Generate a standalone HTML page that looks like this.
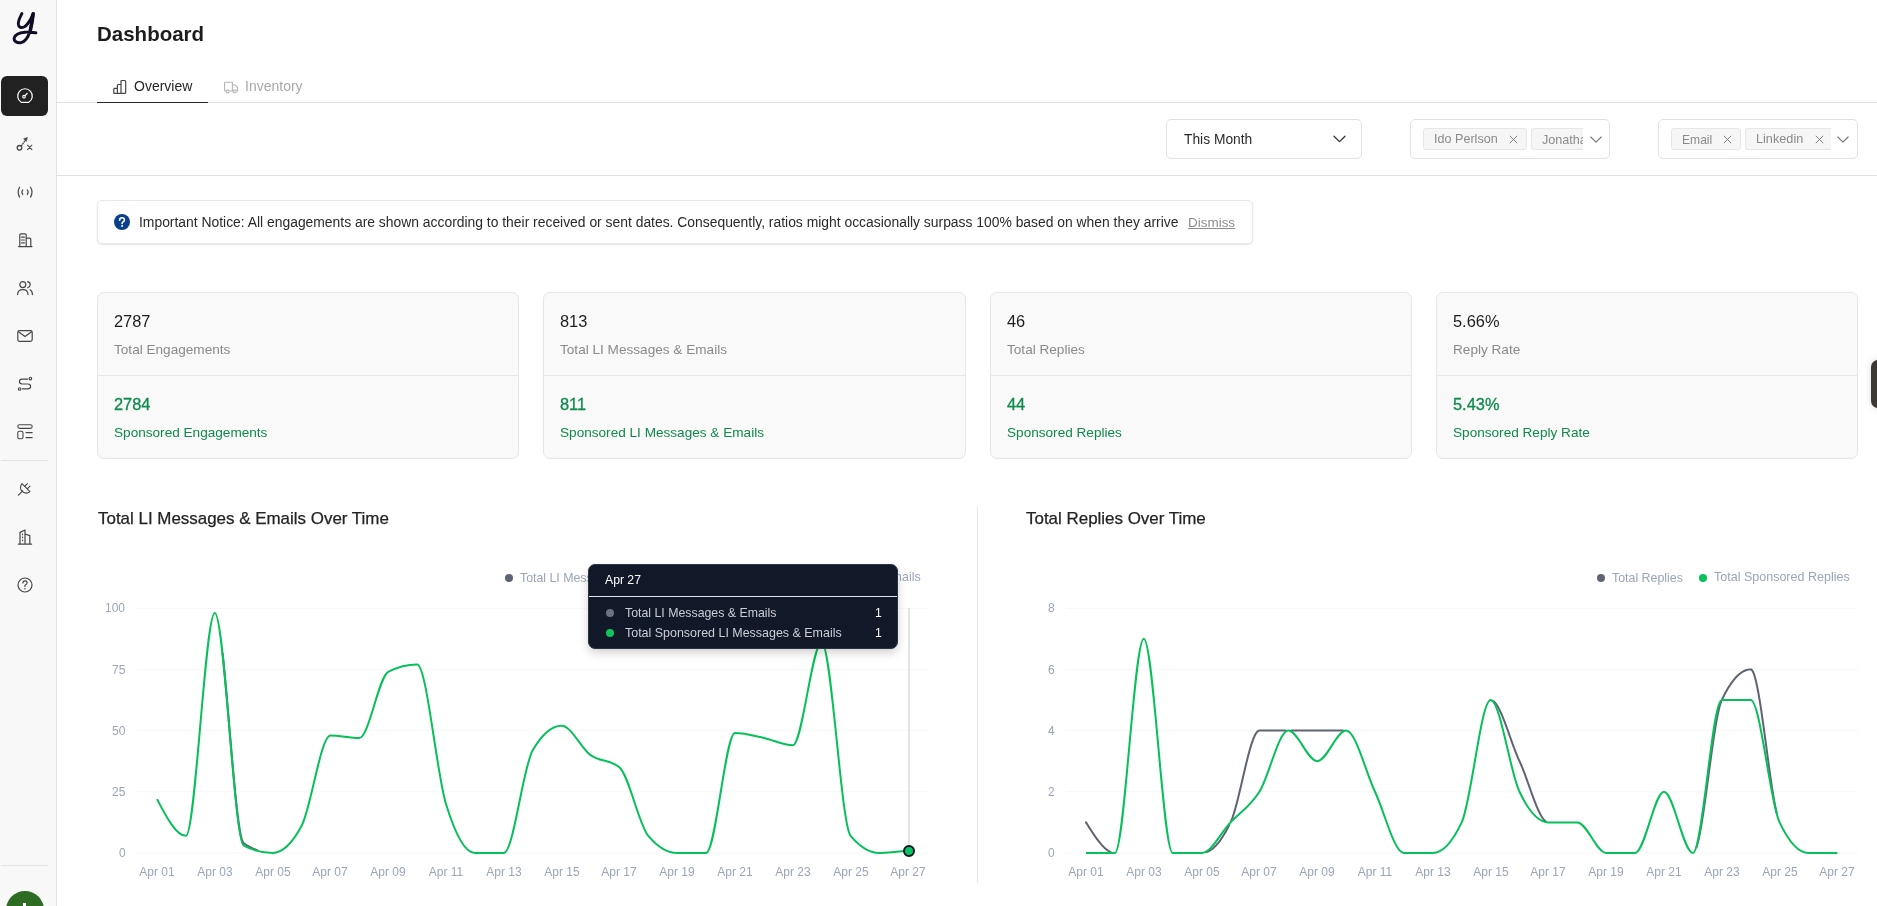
<!DOCTYPE html>
<html><head><meta charset="utf-8"><title>Dashboard</title>
<style>
html,body{margin:0;padding:0;background:#fff;}
body{width:1877px;height:906px;overflow:hidden;position:relative;font-family:"Liberation Sans", sans-serif;}
.t{position:absolute;white-space:nowrap;will-change:transform;}
.b{position:absolute;box-sizing:border-box;}
svg{position:absolute;overflow:visible;}
</style></head><body>
<div class="b" style="left:0px;top:0px;width:57px;height:906px;background:#f8f8f8;border-right:1px solid #e6e2e2;"></div><svg style="left:0;top:0" width="57" height="60" viewBox="0 0 57 60"><path d="M21.9,13.6 C20.2,17 18.2,20.5 18.3,24 C18.4,27 21,28.4 24,27 C27.5,25.2 31,19 33.2,13.6 C32.5,19 31.6,25 30,31.2 C28.2,37 25.5,41.5 21,42.6 C17,43.5 13.6,41 14.2,38 C15,34.6 20,32.6 25,32.2 C29,31.9 33,32.6 35.9,32.8" fill="none" stroke="#120d26" stroke-width="2.9" stroke-linecap="round" stroke-linejoin="round"/><path d="M33.2,13.8 C32.6,19 31.8,24.5 30.4,30" fill="none" stroke="#120d26" stroke-width="3.5" stroke-linecap="round"/></svg><div class="b" style="left:1px;top:76px;width:47px;height:40px;background:#212121;border-radius:6px;"></div><svg style="left:16px;top:88px" width="18" height="16" viewBox="0 0 18 16"><path d="M5.2,14.3 A7.3,7.3 0 1 1 12.8,14.3 Z" fill="none" stroke-linecap="round" stroke-linejoin="round" stroke="#fff" stroke-width="1.2"/><circle cx="8" cy="8.7" r="1.3" fill="none" stroke-linecap="round" stroke-linejoin="round" stroke="#fff" stroke-width="1.1"/><path d="M9,7.7 L11.2,5.5" fill="none" stroke-linecap="round" stroke-linejoin="round" stroke="#fff" stroke-width="1.2"/></svg><svg style="left:15px;top:135px" width="20" height="18" viewBox="0 0 20 18"><circle cx="4.5" cy="12.8" r="2.3" fill="none" stroke-linecap="round" stroke-linejoin="round" stroke="#474747" stroke-width="1.3"/><path d="M6.3,10.8 L10.6,5" fill="none" stroke-linecap="round" stroke-linejoin="round" stroke="#474747" stroke-width="1.3" stroke-dasharray="0.9 1.5"/><path d="M12.4,2.6 L8.6,3.7 L11.3,6.4 Z" fill="#474747" stroke="#474747" stroke-width="0.6" stroke-linejoin="round"/><path d="M12.5,10.2 L16.9,14.6 M16.9,10.2 L12.5,14.6" fill="none" stroke-linecap="round" stroke-linejoin="round" stroke="#474747" stroke-width="1.05"/></svg><svg style="left:16px;top:184px" width="18" height="16" viewBox="0 0 18 16"><path d="M3.6,3.2 Q0.8,8.2 3.6,13.1 M14.6,3.2 Q17.4,8.2 14.6,13.1" fill="none" stroke-linecap="round" stroke-linejoin="round" stroke="#474747" stroke-width="1.2"/><path d="M6.8,5.9 Q4.8,8.3 6.8,10.7 M11.2,5.9 Q13.2,8.3 11.2,10.7" fill="none" stroke-linecap="round" stroke-linejoin="round" stroke="#474747" stroke-width="1.05"/></svg><svg style="left:16px;top:232px" width="18" height="16" viewBox="0 0 18 16"><path d="M2.6,14.6 H16 M3.8,14.6 V3 Q3.8,1.8 5,1.8 H9 Q10.2,1.8 10.2,3 V14.6 M10.2,6.2 H13.6 Q14.8,6.2 14.8,7.4 V14.6 M5.6,5.2 H8.4 M5.6,8 H8.4 M5.6,10.8 H8.4" fill="none" stroke-linecap="round" stroke-linejoin="round" stroke="#474747" stroke-width="1.2"/></svg><svg style="left:16px;top:279px" width="18" height="18" viewBox="0 0 18 18"><circle cx="6.8" cy="5.6" r="3" fill="none" stroke-linecap="round" stroke-linejoin="round" stroke="#474747" stroke-width="1.2"/><path d="M1.6,15.6 Q1.6,10.6 6.8,10.6 Q12,10.6 12,15.6" fill="none" stroke-linecap="round" stroke-linejoin="round" stroke="#474747" stroke-width="1.2"/><path d="M11.6,2.6 Q14.4,3.2 14.2,6 Q14,8 11.8,8.6 M14,10.8 Q16.4,12 16.4,15.6" fill="none" stroke-linecap="round" stroke-linejoin="round" stroke="#474747" stroke-width="1.2"/></svg><svg style="left:16px;top:328px" width="18" height="16" viewBox="0 0 18 16"><rect x="1.8" y="2.6" width="14.4" height="10.8" rx="1.8" fill="none" stroke-linecap="round" stroke-linejoin="round" stroke="#474747" stroke-width="1.2"/><path d="M2.4,3.8 L9,8.6 L15.6,3.8" fill="none" stroke-linecap="round" stroke-linejoin="round" stroke="#474747" stroke-width="1.2"/></svg><svg style="left:16px;top:376px" width="18" height="16" viewBox="0 0 18 16"><circle cx="3.6" cy="13" r="1.3" fill="none" stroke-linecap="round" stroke-linejoin="round" stroke="#474747" stroke-width="1.1"/><circle cx="14.4" cy="2.6" r="1.3" fill="none" stroke-linecap="round" stroke-linejoin="round" stroke="#474747" stroke-width="1.1"/><path d="M11.6,3.2 H6.2 Q3.4,3.2 3.4,5.6 Q3.4,8 6.2,8 H11.8 Q14.6,8 14.6,10.4 Q14.6,12.8 11.8,12.8 H6.4" fill="none" stroke-linecap="round" stroke-linejoin="round" stroke="#474747" stroke-width="1.2"/></svg><svg style="left:16px;top:424px" width="18" height="16" viewBox="0 0 18 16"><rect x="1.8" y="0.8" width="14.4" height="3.6" rx="1.8" fill="none" stroke-linecap="round" stroke-linejoin="round" stroke="#474747" stroke-width="1.1"/><rect x="1.8" y="7.2" width="5.2" height="7.6" rx="1.6" fill="none" stroke-linecap="round" stroke-linejoin="round" stroke="#474747" stroke-width="1.1"/><path d="M10,8.6 H16.2 M10,13.6 H16.2" fill="none" stroke-linecap="round" stroke-linejoin="round" stroke="#474747" stroke-width="1.1"/></svg><div class="b" style="left:1px;top:460px;width:47px;height:1px;background:#e6e2e2;"></div><svg style="left:17px;top:479px" width="18" height="18" viewBox="0 0 18 18"><path d="M5,4.6 L13,12.6 A5.66,5.66 0 0 1 5,4.6 Z" fill="none" stroke-linecap="round" stroke-linejoin="round" stroke="#474747" stroke-width="1.1"/><path d="M7.7,7.3 L10.4,4.6 M10.3,9.9 L13,7.2 M5.8,11.8 L1.4,16.2" fill="none" stroke-linecap="round" stroke-linejoin="round" stroke="#474747" stroke-width="1.1"/></svg><svg style="left:16px;top:528px" width="18" height="18" viewBox="0 0 18 18"><path d="M2.4,16.2 H15.6 M4,16.2 V4.4 L9,2 V16.2 M9,6 L13.8,7.6 V16.2" fill="none" stroke-linecap="round" stroke-linejoin="round" stroke="#474747" stroke-width="1.2"/><path d="M6.6,6 V6.8 M6.6,9 V9.8 M6.6,12 V12.8" fill="none" stroke-linecap="round" stroke-linejoin="round" stroke="#474747" stroke-width="1"/></svg><svg style="left:16px;top:576px" width="18" height="18" viewBox="0 0 18 18"><circle cx="9" cy="9" r="7" fill="none" stroke-linecap="round" stroke-linejoin="round" stroke="#474747" stroke-width="1.2"/><path d="M6.9,7 Q7,4.9 9,4.9 Q11.1,4.9 11.1,6.8 Q11.1,8.2 9.3,9 Q8.9,9.3 8.9,10.4" fill="none" stroke-linecap="round" stroke-linejoin="round" stroke="#474747" stroke-width="1.2"/><circle cx="8.9" cy="12.8" r="0.7" fill="#474747"/></svg><div class="b" style="left:1px;top:865px;width:47px;height:1px;background:#e6e2e2;"></div><div class="b" style="left:6px;top:891px;width:38px;height:38px;background:#2e6b23;border-radius:50%;"></div><div class="b" style="left:23px;top:903px;width:3px;height:10px;background:#fff;"></div><div class="t" style="left:97px;top:23.65px;font-size:20.5px;line-height:20.5px;color:#1c1c1c;font-weight:700;">Dashboard</div><div class="b" style="left:57px;top:102px;width:1820px;height:1px;background:#dfe2e7;"></div><div class="b" style="left:97px;top:101.6px;width:111px;height:1.4px;background:#262626;"></div><svg style="left:112px;top:79px" width="16" height="16" viewBox="0 0 16 16"><path d="M1.8,14.4 V10.2 Q1.8,9.3 2.7,9.3 H5.4 V14.4 Z M5.4,14.4 V6.4 Q5.4,5.5 6.3,5.5 H9 V14.4 M9,14.4 V2.4 Q9,1.5 9.9,1.5 H12.8 Q13.7,1.5 13.7,2.4 V13.5 Q13.7,14.4 12.8,14.4 H2.7" fill="none" stroke="#444" stroke-width="1.2" stroke-linejoin="round"/></svg><div class="t" style="left:133.5px;top:79.25px;font-size:14px;line-height:14px;color:#262626;font-weight:400;">Overview</div><svg style="left:223px;top:79px" width="16" height="16" viewBox="0 0 16 16"><path d="M1.6,12 V4 Q1.6,3.2 2.4,3.2 H9.4 V12 M9.4,6 H12.4 L14.6,8.6 V12 H13.2 M1.6,12 H3 M6.2,12 H10.4" fill="none" stroke="#b5b5b5" stroke-width="1.1" stroke-linejoin="round"/><circle cx="4.6" cy="12.4" r="1.5" fill="none" stroke="#b5b5b5" stroke-width="1.1"/><circle cx="11.8" cy="12.4" r="1.5" fill="none" stroke="#b5b5b5" stroke-width="1.1"/></svg><div class="t" style="left:244.5px;top:79.25px;font-size:14px;line-height:14px;color:#a8a8a8;font-weight:400;">Inventory</div><div class="b" style="left:57px;top:175px;width:1820px;height:1px;background:#e6e2e2;"></div><div class="b" style="left:1166px;top:119px;width:196px;height:40px;border:1px solid #e6e1e1;border-radius:5px;background:#fff;"></div><div class="t" style="left:1183.5px;top:132.92px;font-size:13.8px;line-height:13.8px;color:#2a2a2a;font-weight:400;">This Month</div><svg style="left:1332.5px;top:135px" width="13" height="8" viewBox="0 0 13 8"><path d="M1,1.2 L6.5,6.6 L12,1.2" fill="none" stroke="#333" stroke-width="1.3" stroke-linecap="round" stroke-linejoin="round"/></svg><div class="b" style="left:1410px;top:119px;width:200px;height:40px;border:1px solid #e6e1e1;border-radius:5px;background:#fff;"></div><div class="b" style="left:1423px;top:128px;width:104px;height:22px;border:1px solid #ebe6e6;border-radius:3px;background:#f6f6f6;"></div><div class="t" style="left:1433.6px;top:133.43px;font-size:12.6px;line-height:12.6px;color:#8a8a8a;font-weight:400;">Ido Perlson</div><svg style="left:1508.5px;top:134.5px" width="9" height="9" viewBox="0 0 9 9"><path d="M0.8,0.8 L8.2,8.2 M8.2,0.8 L0.8,8.2" fill="none" stroke="#7a7a7a" stroke-width="0.95"/></svg><div class="b" style="left:1531px;top:128px;width:52px;height:22px;overflow:hidden;border:1px solid #ebe6e6;border-right:none;border-radius:3px 0 0 3px;background:#f6f6f6;"><div class="t" style="left:10px;top:5.43px;font-size:12.6px;line-height:12.6px;color:#8a8a8a;">Jonathan</div></div><svg style="left:1589.5px;top:135.5px" width="12" height="8" viewBox="0 0 12 8"><path d="M0.8,1 L6,6.2 L11.2,1" fill="none" stroke="#777" stroke-width="1.1" stroke-linecap="round" stroke-linejoin="round"/></svg><div class="b" style="left:1658px;top:119px;width:200px;height:40px;border:1px solid #e6e1e1;border-radius:5px;background:#fff;"></div><div class="b" style="left:1671px;top:128px;width:70px;height:22px;border:1px solid #ebe6e6;border-radius:3px;background:#f6f6f6;"></div><div class="t" style="left:1681.7px;top:133.86px;font-size:12.1px;line-height:12.1px;color:#8a8a8a;font-weight:400;">Email</div><svg style="left:1722.5px;top:134.5px" width="9" height="9" viewBox="0 0 9 9"><path d="M0.8,0.8 L8.2,8.2 M8.2,0.8 L0.8,8.2" fill="none" stroke="#7a7a7a" stroke-width="0.95"/></svg><div class="b" style="left:1745px;top:128px;width:86px;height:22px;border:1px solid #ebe6e6;border-right:none;border-radius:3px 0 0 3px;background:#f6f6f6;"></div><div class="t" style="left:1756.4px;top:133.35px;font-size:12.7px;line-height:12.7px;color:#8a8a8a;font-weight:400;">Linkedin</div><svg style="left:1814.5px;top:134.5px" width="9" height="9" viewBox="0 0 9 9"><path d="M0.8,0.8 L8.2,8.2 M8.2,0.8 L0.8,8.2" fill="none" stroke="#7a7a7a" stroke-width="0.95"/></svg><svg style="left:1837px;top:135.5px" width="12" height="8" viewBox="0 0 12 8"><path d="M0.8,1 L6,6.2 L11.2,1" fill="none" stroke="#777" stroke-width="1.1" stroke-linecap="round" stroke-linejoin="round"/></svg><div class="b" style="left:97px;top:200px;width:1156px;height:44px;border:1px solid #ebe7e7;border-radius:5px;background:#fff;box-shadow:0 1px 2px rgba(0,0,0,0.10);"></div><svg style="left:114px;top:214px" width="16" height="16" viewBox="0 0 16 16"><circle cx="8" cy="8" r="8" fill="#0a3f8c"/><path d="M5.6,6.2 Q5.7,3.7 8,3.7 Q10.4,3.7 10.4,5.9 Q10.4,7.3 8.9,8 Q8.1,8.4 8.1,9.6" fill="none" stroke="#fff" stroke-width="1.6" stroke-linecap="round"/><circle cx="8.1" cy="12" r="1" fill="#fff"/></svg><div class="t" style="left:138.6px;top:216.04px;font-size:13.89px;line-height:13.89px;color:#2a2a2a;font-weight:400;">Important Notice: All engagements are shown according to their received or sent dates. Consequently, ratios might occasionally surpass 100% based on when they arrive</div><div class="t" style="left:1188.3px;top:216.41px;font-size:13.46px;line-height:13.46px;color:#8c8c8c;font-weight:400;text-decoration:underline;text-underline-offset:1px;">Dismiss</div><div class="b" style="left:97px;top:292px;width:422px;height:167px;border:1px solid #e9e5e5;border-radius:7px;background:#f9f9f9;"></div><div class="b" style="left:98px;top:375px;width:420px;height:1px;background:#e9e5e5;"></div><div class="t" style="left:114.2px;top:313.22px;font-size:16.4px;line-height:16.4px;color:#1e1e1e;font-weight:400;">2787</div><div class="t" style="left:114.2px;top:343.29px;font-size:13.6px;line-height:13.6px;color:#8a8a8a;font-weight:400;">Total Engagements</div><div class="t" style="left:114.2px;top:396.42px;font-size:16.4px;line-height:16.4px;color:#0f8a4c;font-weight:400;-webkit-text-stroke:0.3px #0f8a4c;">2784</div><div class="t" style="left:114.2px;top:426.39px;font-size:13.6px;line-height:13.6px;color:#0f8a4c;font-weight:400;">Sponsored Engagements</div><div class="b" style="left:543px;top:292px;width:423px;height:167px;border:1px solid #e9e5e5;border-radius:7px;background:#f9f9f9;"></div><div class="b" style="left:544px;top:375px;width:421px;height:1px;background:#e9e5e5;"></div><div class="t" style="left:560.2px;top:313.22px;font-size:16.4px;line-height:16.4px;color:#1e1e1e;font-weight:400;">813</div><div class="t" style="left:560.2px;top:343.29px;font-size:13.6px;line-height:13.6px;color:#8a8a8a;font-weight:400;">Total LI Messages &amp; Emails</div><div class="t" style="left:560.2px;top:396.42px;font-size:16.4px;line-height:16.4px;color:#0f8a4c;font-weight:400;-webkit-text-stroke:0.3px #0f8a4c;">811</div><div class="t" style="left:560.2px;top:426.39px;font-size:13.6px;line-height:13.6px;color:#0f8a4c;font-weight:400;">Sponsored LI Messages &amp; Emails</div><div class="b" style="left:990px;top:292px;width:422px;height:167px;border:1px solid #e9e5e5;border-radius:7px;background:#f9f9f9;"></div><div class="b" style="left:991px;top:375px;width:420px;height:1px;background:#e9e5e5;"></div><div class="t" style="left:1007.2px;top:313.22px;font-size:16.4px;line-height:16.4px;color:#1e1e1e;font-weight:400;">46</div><div class="t" style="left:1007.2px;top:343.29px;font-size:13.6px;line-height:13.6px;color:#8a8a8a;font-weight:400;">Total Replies</div><div class="t" style="left:1007.2px;top:396.42px;font-size:16.4px;line-height:16.4px;color:#0f8a4c;font-weight:400;-webkit-text-stroke:0.3px #0f8a4c;">44</div><div class="t" style="left:1007.2px;top:426.39px;font-size:13.6px;line-height:13.6px;color:#0f8a4c;font-weight:400;">Sponsored Replies</div><div class="b" style="left:1436px;top:292px;width:422px;height:167px;border:1px solid #e9e5e5;border-radius:7px;background:#f9f9f9;"></div><div class="b" style="left:1437px;top:375px;width:420px;height:1px;background:#e9e5e5;"></div><div class="t" style="left:1453.2px;top:313.22px;font-size:16.4px;line-height:16.4px;color:#1e1e1e;font-weight:400;">5.66%</div><div class="t" style="left:1453.2px;top:343.29px;font-size:13.6px;line-height:13.6px;color:#8a8a8a;font-weight:400;">Reply Rate</div><div class="t" style="left:1453.2px;top:396.42px;font-size:16.4px;line-height:16.4px;color:#0f8a4c;font-weight:400;-webkit-text-stroke:0.3px #0f8a4c;">5.43%</div><div class="t" style="left:1453.2px;top:426.39px;font-size:13.6px;line-height:13.6px;color:#0f8a4c;font-weight:400;">Sponsored Reply Rate</div><div class="b" style="left:1871px;top:360px;width:12px;height:48px;background:#3d3935;border-radius:7px 0 0 7px;box-shadow:0 0 6px rgba(0,0,0,0.15);"></div><div class="t" style="left:97.9px;top:510.75px;font-size:16.95px;line-height:16.95px;color:#232323;font-weight:400;-webkit-text-stroke:0.25px #232323;">Total LI Messages &amp; Emails Over Time</div><svg style="left:0;top:0" width="1877" height="906" viewBox="0 0 1877 906"><line x1="137" y1="853.00" x2="929" y2="853.00" stroke="#f7f7f7" stroke-width="1"/><line x1="137" y1="791.80" x2="929" y2="791.80" stroke="#f7f7f7" stroke-width="1"/><line x1="137" y1="730.60" x2="929" y2="730.60" stroke="#f7f7f7" stroke-width="1"/><line x1="137" y1="669.40" x2="929" y2="669.40" stroke="#f7f7f7" stroke-width="1"/><line x1="137" y1="608.20" x2="929" y2="608.20" stroke="#f7f7f7" stroke-width="1"/></svg><div class="t" style="right:1751.5px;top:847.24px;font-size:12px;line-height:12px;color:#9aa5b8;font-weight:400;text-align:right;">0</div><div class="t" style="right:1751.5px;top:786.04px;font-size:12px;line-height:12px;color:#9aa5b8;font-weight:400;text-align:right;">25</div><div class="t" style="right:1751.5px;top:724.84px;font-size:12px;line-height:12px;color:#9aa5b8;font-weight:400;text-align:right;">50</div><div class="t" style="right:1751.5px;top:663.64px;font-size:12px;line-height:12px;color:#9aa5b8;font-weight:400;text-align:right;">75</div><div class="t" style="right:1751.5px;top:602.44px;font-size:12px;line-height:12px;color:#9aa5b8;font-weight:400;text-align:right;">100</div><div class="t" style="left:97.0px;width:120px;text-align:center;top:866.04px;font-size:12px;line-height:12px;color:#9aa5b8;font-weight:400;">Apr 01</div><div class="t" style="left:154.8px;width:120px;text-align:center;top:866.04px;font-size:12px;line-height:12px;color:#9aa5b8;font-weight:400;">Apr 03</div><div class="t" style="left:212.60000000000002px;width:120px;text-align:center;top:866.04px;font-size:12px;line-height:12px;color:#9aa5b8;font-weight:400;">Apr 05</div><div class="t" style="left:270.4px;width:120px;text-align:center;top:866.04px;font-size:12px;line-height:12px;color:#9aa5b8;font-weight:400;">Apr 07</div><div class="t" style="left:328.2px;width:120px;text-align:center;top:866.04px;font-size:12px;line-height:12px;color:#9aa5b8;font-weight:400;">Apr 09</div><div class="t" style="left:386.0px;width:120px;text-align:center;top:866.04px;font-size:12px;line-height:12px;color:#9aa5b8;font-weight:400;">Apr 11</div><div class="t" style="left:443.79999999999995px;width:120px;text-align:center;top:866.04px;font-size:12px;line-height:12px;color:#9aa5b8;font-weight:400;">Apr 13</div><div class="t" style="left:501.5999999999999px;width:120px;text-align:center;top:866.04px;font-size:12px;line-height:12px;color:#9aa5b8;font-weight:400;">Apr 15</div><div class="t" style="left:559.4px;width:120px;text-align:center;top:866.04px;font-size:12px;line-height:12px;color:#9aa5b8;font-weight:400;">Apr 17</div><div class="t" style="left:617.1999999999999px;width:120px;text-align:center;top:866.04px;font-size:12px;line-height:12px;color:#9aa5b8;font-weight:400;">Apr 19</div><div class="t" style="left:675.0px;width:120px;text-align:center;top:866.04px;font-size:12px;line-height:12px;color:#9aa5b8;font-weight:400;">Apr 21</div><div class="t" style="left:732.8px;width:120px;text-align:center;top:866.04px;font-size:12px;line-height:12px;color:#9aa5b8;font-weight:400;">Apr 23</div><div class="t" style="left:790.5999999999999px;width:120px;text-align:center;top:866.04px;font-size:12px;line-height:12px;color:#9aa5b8;font-weight:400;">Apr 25</div><div class="t" style="left:848.4px;width:120px;text-align:center;top:866.04px;font-size:12px;line-height:12px;color:#9aa5b8;font-weight:400;">Apr 27</div><svg style="left:0;top:0" width="1877" height="906" viewBox="0 0 1877 906"><path d="M222.63,653.55 L223.23,659.23 L223.83,665.15 L224.43,671.31 L225.03,677.66 L225.64,684.19 L226.24,690.87 L226.84,697.67 L227.44,704.59 L228.05,711.58 L228.65,718.63 L229.25,725.71 L229.85,732.80 L230.45,739.87 L231.06,746.90 L231.66,753.87 L232.26,760.76 L232.86,767.53 L233.47,774.17 L234.07,780.65 L234.67,786.95 L235.27,793.04 L235.87,798.90 L236.48,804.50 L237.08,809.83 L237.68,814.85 L238.28,819.55 L238.88,823.90 L239.49,827.87 L240.09,831.45 L240.69,834.60 L241.29,837.31 L241.89,839.55 L242.50,841.30 L243.10,842.52 L243.70,843.21M243.70,843.21 L244.30,843.61 L244.90,844.01 L245.51,844.40 L246.11,844.77 L246.71,845.14 L247.31,845.51 L247.91,845.86 L248.52,846.20 L249.12,846.54 L249.72,846.87 L250.32,847.18 L250.92,847.49 L251.53,847.80 L252.13,848.09 L252.73,848.37 L253.33,848.65 L253.93,848.92 L254.54,849.18 L255.14,849.43 L255.74,849.67 L256.34,849.90 L256.95,850.13" fill="none" stroke="#5e6472" stroke-width="2" stroke-linecap="round" stroke-linejoin="round"/><path d="M157.00,799.14C166.63,817.50 176.27,835.86 185.90,835.86C195.53,835.86 205.17,613.10 214.80,613.10C224.43,613.10 234.07,840.76 243.70,845.66C253.33,850.55 262.97,853.00 272.60,853.00C282.23,853.00 291.87,844.02 301.50,826.07C311.13,808.12 320.77,735.50 330.40,735.50C340.03,735.50 349.67,737.94 359.30,737.94C368.93,737.94 378.57,676.74 388.20,671.85C397.83,666.95 407.47,664.50 417.10,664.50C426.73,664.50 436.37,772.62 446.00,804.04C455.63,835.46 465.27,853.00 474.90,853.00C484.53,853.00 494.17,853.00 503.80,853.00C513.43,853.00 523.07,766.50 532.70,750.18C542.33,733.86 551.97,725.70 561.60,725.70C571.23,725.70 580.87,748.14 590.50,755.08C600.13,762.02 609.77,759.16 619.40,767.32C629.03,775.48 638.67,824.44 648.30,835.86C657.93,847.29 667.57,853.00 677.20,853.00C686.83,853.00 696.47,853.00 706.10,853.00C715.73,853.00 725.37,733.05 735.00,733.05C744.63,733.05 754.27,735.90 763.90,737.94C773.53,739.98 783.17,745.29 792.80,745.29C802.43,745.29 812.07,642.47 821.70,642.47C831.33,642.47 840.97,824.44 850.60,835.86C860.23,847.29 869.87,853.00 879.50,853.00C889.13,853.00 898.77,851.78 908.40,850.55" fill="none" stroke="#06c05a" stroke-width="2"/></svg><div class="b" style="left:977px;top:507px;width:1px;height:376px;background:#ebe7e7;"></div><div class="t" style="left:1026px;top:510.75px;font-size:16.95px;line-height:16.95px;color:#232323;font-weight:400;-webkit-text-stroke:0.25px #232323;">Total Replies Over Time</div><svg style="left:0;top:0" width="1877" height="906" viewBox="0 0 1877 906"><line x1="1066" y1="853.00" x2="1858" y2="853.00" stroke="#f7f7f7" stroke-width="1"/><line x1="1066" y1="791.80" x2="1858" y2="791.80" stroke="#f7f7f7" stroke-width="1"/><line x1="1066" y1="730.60" x2="1858" y2="730.60" stroke="#f7f7f7" stroke-width="1"/><line x1="1066" y1="669.40" x2="1858" y2="669.40" stroke="#f7f7f7" stroke-width="1"/><line x1="1066" y1="608.20" x2="1858" y2="608.20" stroke="#f7f7f7" stroke-width="1"/></svg><div class="t" style="right:822.5px;top:847.24px;font-size:12px;line-height:12px;color:#9aa5b8;font-weight:400;text-align:right;">0</div><div class="t" style="right:822.5px;top:786.04px;font-size:12px;line-height:12px;color:#9aa5b8;font-weight:400;text-align:right;">2</div><div class="t" style="right:822.5px;top:724.84px;font-size:12px;line-height:12px;color:#9aa5b8;font-weight:400;text-align:right;">4</div><div class="t" style="right:822.5px;top:663.64px;font-size:12px;line-height:12px;color:#9aa5b8;font-weight:400;text-align:right;">6</div><div class="t" style="right:822.5px;top:602.44px;font-size:12px;line-height:12px;color:#9aa5b8;font-weight:400;text-align:right;">8</div><div class="t" style="left:1026.0px;width:120px;text-align:center;top:866.04px;font-size:12px;line-height:12px;color:#9aa5b8;font-weight:400;">Apr 01</div><div class="t" style="left:1083.8px;width:120px;text-align:center;top:866.04px;font-size:12px;line-height:12px;color:#9aa5b8;font-weight:400;">Apr 03</div><div class="t" style="left:1141.6px;width:120px;text-align:center;top:866.04px;font-size:12px;line-height:12px;color:#9aa5b8;font-weight:400;">Apr 05</div><div class="t" style="left:1199.4px;width:120px;text-align:center;top:866.04px;font-size:12px;line-height:12px;color:#9aa5b8;font-weight:400;">Apr 07</div><div class="t" style="left:1257.2px;width:120px;text-align:center;top:866.04px;font-size:12px;line-height:12px;color:#9aa5b8;font-weight:400;">Apr 09</div><div class="t" style="left:1315.0px;width:120px;text-align:center;top:866.04px;font-size:12px;line-height:12px;color:#9aa5b8;font-weight:400;">Apr 11</div><div class="t" style="left:1372.8px;width:120px;text-align:center;top:866.04px;font-size:12px;line-height:12px;color:#9aa5b8;font-weight:400;">Apr 13</div><div class="t" style="left:1430.6px;width:120px;text-align:center;top:866.04px;font-size:12px;line-height:12px;color:#9aa5b8;font-weight:400;">Apr 15</div><div class="t" style="left:1488.4px;width:120px;text-align:center;top:866.04px;font-size:12px;line-height:12px;color:#9aa5b8;font-weight:400;">Apr 17</div><div class="t" style="left:1546.1999999999998px;width:120px;text-align:center;top:866.04px;font-size:12px;line-height:12px;color:#9aa5b8;font-weight:400;">Apr 19</div><div class="t" style="left:1604.0px;width:120px;text-align:center;top:866.04px;font-size:12px;line-height:12px;color:#9aa5b8;font-weight:400;">Apr 21</div><div class="t" style="left:1661.8px;width:120px;text-align:center;top:866.04px;font-size:12px;line-height:12px;color:#9aa5b8;font-weight:400;">Apr 23</div><div class="t" style="left:1719.6px;width:120px;text-align:center;top:866.04px;font-size:12px;line-height:12px;color:#9aa5b8;font-weight:400;">Apr 25</div><div class="t" style="left:1777.4px;width:120px;text-align:center;top:866.04px;font-size:12px;line-height:12px;color:#9aa5b8;font-weight:400;">Apr 27</div><svg style="left:0;top:0" width="1877" height="906" viewBox="0 0 1877 906"><path d="M1086.00,822.40 L1086.60,823.36 L1087.20,824.31 L1087.81,825.27 L1088.41,826.22 L1089.01,827.16 L1089.61,828.11 L1090.21,829.05 L1090.82,829.98 L1091.42,830.91 L1092.02,831.82 L1092.62,832.73 L1093.22,833.64 L1093.83,834.53 L1094.43,835.41 L1095.03,836.28 L1095.63,837.13 L1096.23,837.98 L1096.84,838.81 L1097.44,839.62 L1098.04,840.42 L1098.64,841.20 L1099.25,841.96 L1099.85,842.71 L1100.45,843.44 L1101.05,844.14 L1101.65,844.83 L1102.26,845.50 L1102.86,846.14 L1103.46,846.76 L1104.06,847.35 L1104.67,847.92 L1105.27,848.47 L1105.87,848.98 L1106.47,849.47 L1107.07,849.94 L1107.68,850.37 L1108.28,850.77 L1108.88,851.15 L1109.48,851.49 L1110.08,851.80 L1110.69,852.07M1206.42,852.15 L1207.02,851.92 L1207.62,851.67 L1208.22,851.39 L1208.82,851.09 L1209.43,850.76 L1210.03,850.40 L1210.63,850.01 L1211.23,849.60 L1211.83,849.16 L1212.44,848.70 L1213.04,848.21 L1213.64,847.69 L1214.24,847.14 L1214.85,846.57 L1215.45,845.97 L1216.05,845.35 L1216.65,844.70 L1217.25,844.02 L1217.86,843.32 L1218.46,842.59 L1219.06,841.83 L1219.66,841.05 L1220.27,840.24 L1220.87,839.40 L1221.47,838.54 L1222.07,837.65 L1222.67,836.73 L1223.28,835.79 L1223.88,834.82 L1224.48,833.82 L1225.08,832.80 L1225.68,831.75 L1226.29,830.67 L1226.89,829.57 L1227.49,828.44 L1228.09,827.29 L1228.69,826.11 L1229.30,824.90M1231.10,821.06 L1231.70,819.59 L1232.31,818.01 L1232.91,816.31 L1233.51,814.50 L1234.11,812.60 L1234.71,810.60 L1235.32,808.52 L1235.92,806.35 L1236.52,804.12 L1237.12,801.81 L1237.72,799.45 L1238.33,797.03 L1238.93,794.57 L1239.53,792.07 L1240.13,789.53 L1240.73,786.97 L1241.34,784.39 L1241.94,781.79 L1242.54,779.19 L1243.14,776.59 L1243.75,773.99 L1244.35,771.41 L1244.95,768.85 L1245.55,766.31 L1246.15,763.81 L1246.76,761.35 L1247.36,758.93 L1247.96,756.57 L1248.56,754.27 L1249.17,752.03 L1249.77,749.87 L1250.37,747.78 L1250.97,745.78 L1251.57,743.88 L1252.18,742.08 L1252.78,740.38 L1253.38,738.79 L1253.98,737.32 L1254.58,735.98 L1255.19,734.78 L1255.79,733.71 L1256.39,732.79 L1256.99,732.02 L1257.59,731.41 L1258.20,730.96 L1258.80,730.69 L1259.40,730.60M1259.40,730.60 L1260.00,730.60 L1260.60,730.60 L1261.21,730.60 L1261.81,730.60 L1262.41,730.60 L1263.01,730.60 L1263.61,730.60 L1264.22,730.60 L1264.82,730.60 L1265.42,730.60 L1266.02,730.60 L1266.62,730.60 L1267.23,730.60 L1267.83,730.60 L1268.43,730.60 L1269.03,730.60 L1269.63,730.60 L1270.24,730.60 L1270.84,730.60 L1271.44,730.60 L1272.04,730.60 L1272.65,730.60 L1273.25,730.60 L1273.85,730.60 L1274.45,730.60 L1275.05,730.60 L1275.66,730.60 L1276.26,730.60 L1276.86,730.60 L1277.46,730.60 L1278.07,730.60 L1278.67,730.60 L1279.27,730.60 L1279.87,730.60 L1280.47,730.60 L1281.08,730.60 L1281.68,730.60 L1282.28,730.60 L1282.88,730.60 L1283.48,730.60 L1284.09,730.60 L1284.69,730.60 L1285.29,730.60 L1285.89,730.60M1291.31,730.60 L1291.91,730.60 L1292.51,730.60 L1293.12,730.60 L1293.72,730.60 L1294.32,730.60 L1294.92,730.60 L1295.52,730.60 L1296.13,730.60 L1296.73,730.60 L1297.33,730.60 L1297.93,730.60 L1298.53,730.60 L1299.14,730.60 L1299.74,730.60 L1300.34,730.60 L1300.94,730.60 L1301.55,730.60 L1302.15,730.60 L1302.75,730.60 L1303.35,730.60 L1303.95,730.60 L1304.56,730.60 L1305.16,730.60 L1305.76,730.60 L1306.36,730.60 L1306.97,730.60 L1307.57,730.60 L1308.17,730.60 L1308.77,730.60 L1309.37,730.60 L1309.98,730.60 L1310.58,730.60 L1311.18,730.60 L1311.78,730.60 L1312.38,730.60 L1312.99,730.60 L1313.59,730.60 L1314.19,730.60 L1314.79,730.60 L1315.39,730.60 L1316.00,730.60 L1316.60,730.60 L1317.20,730.60M1317.20,730.60 L1317.80,730.60 L1318.40,730.60 L1319.01,730.60 L1319.61,730.60 L1320.21,730.60 L1320.81,730.60 L1321.41,730.60 L1322.02,730.60 L1322.62,730.60 L1323.22,730.60 L1323.82,730.60 L1324.42,730.60 L1325.03,730.60 L1325.63,730.60 L1326.23,730.60 L1326.83,730.60 L1327.43,730.60 L1328.04,730.60 L1328.64,730.60 L1329.24,730.60 L1329.84,730.60 L1330.45,730.60 L1331.05,730.60 L1331.65,730.60 L1332.25,730.60 L1332.85,730.60 L1333.46,730.60 L1334.06,730.60 L1334.66,730.60 L1335.26,730.60 L1335.87,730.60 L1336.47,730.60 L1337.07,730.60 L1337.67,730.60 L1338.27,730.60 L1338.88,730.60 L1339.48,730.60 L1340.08,730.60 L1340.68,730.60 L1341.28,730.60 L1341.89,730.60 L1342.49,730.60 L1343.09,730.60M1493.61,701.26 L1494.21,701.79 L1494.81,702.41 L1495.42,703.12 L1496.02,703.90 L1496.62,704.76 L1497.22,705.69 L1497.82,706.69 L1498.43,707.76 L1499.03,708.89 L1499.63,710.09 L1500.23,711.33 L1500.83,712.63 L1501.44,713.99 L1502.04,715.38 L1502.64,716.82 L1503.24,718.30 L1503.85,719.82 L1504.45,721.37 L1505.05,722.95 L1505.65,724.56 L1506.25,726.19 L1506.86,727.84 L1507.46,729.50 L1508.06,731.18 L1508.66,732.87 L1509.27,734.57 L1509.87,736.27 L1510.47,737.97 L1511.07,739.66 L1511.67,741.35 L1512.28,743.03 L1512.88,744.70 L1513.48,746.35 L1514.08,747.98 L1514.68,749.58 L1515.29,751.16 L1515.89,752.71 L1516.49,754.23 L1517.09,755.71 L1517.69,757.15 L1518.30,758.55 L1518.90,759.90 L1519.50,761.20M1519.50,761.20 L1520.10,762.50 L1520.70,763.85 L1521.31,765.25 L1521.91,766.69 L1522.51,768.17 L1523.11,769.69 L1523.71,771.24 L1524.32,772.82 L1524.92,774.42 L1525.52,776.05 L1526.12,777.70 L1526.72,779.37 L1527.33,781.05 L1527.93,782.74 L1528.53,784.43 L1529.13,786.13 L1529.73,787.83 L1530.34,789.53 L1530.94,791.22 L1531.54,792.90 L1532.14,794.56 L1532.75,796.21 L1533.35,797.84 L1533.95,799.45 L1534.55,801.03 L1535.15,802.58 L1535.76,804.10 L1536.36,805.58 L1536.96,807.02 L1537.56,808.41 L1538.17,809.77 L1538.77,811.07 L1539.37,812.31 L1539.97,813.51 L1540.57,814.64 L1541.18,815.71 L1541.78,816.71 L1542.38,817.64 L1542.98,818.50 L1543.58,819.28 L1544.19,819.99 L1544.79,820.61 L1545.39,821.14M1696.51,847.26 L1697.11,845.30 L1697.72,843.08 L1698.32,840.63 L1698.92,837.95 L1699.52,835.05 L1700.12,831.96 L1700.73,828.68 L1701.33,825.23 L1701.93,821.62 L1702.53,817.87 L1703.13,813.98 L1703.74,809.97 L1704.34,805.85 L1704.94,801.65 L1705.54,797.36 L1706.15,793.00 L1706.75,788.60 L1707.35,784.15 L1707.95,779.68 L1708.55,775.19 L1709.16,770.70 L1709.76,766.23 L1710.36,761.78 L1710.96,757.38 L1711.57,753.02 L1712.17,748.73 L1712.77,744.53 L1713.37,740.41 L1713.97,736.40 L1714.58,732.51 L1715.18,728.76 L1715.78,725.15 L1716.38,721.69 L1716.98,718.42 L1717.59,715.32 L1718.19,712.43 L1718.79,709.75 L1719.39,707.30 L1719.99,705.08 L1720.60,703.12 L1721.20,701.42M1722.40,698.74 L1723.00,697.50 L1723.61,696.29 L1724.21,695.11 L1724.81,693.96 L1725.41,692.83 L1726.01,691.73 L1726.62,690.65 L1727.22,689.60 L1727.82,688.58 L1728.42,687.58 L1729.02,686.61 L1729.63,685.67 L1730.23,684.75 L1730.83,683.86 L1731.43,683.00 L1732.03,682.16 L1732.64,681.35 L1733.24,680.57 L1733.84,679.81 L1734.44,679.08 L1735.05,678.38 L1735.65,677.70 L1736.25,677.05 L1736.85,676.43 L1737.45,675.83 L1738.06,675.26 L1738.66,674.71 L1739.26,674.19 L1739.86,673.70 L1740.47,673.24 L1741.07,672.80 L1741.67,672.39 L1742.27,672.00 L1742.87,671.64 L1743.48,671.31 L1744.08,671.01 L1744.68,670.73 L1745.28,670.48 L1745.88,670.25 L1746.49,670.05 L1747.09,669.88 L1747.69,669.73 L1748.29,669.61 L1748.89,669.52 L1749.50,669.45 L1750.10,669.41 L1750.70,669.40M1750.70,669.40 L1751.30,669.57 L1751.90,670.07 L1752.51,670.89 L1753.11,672.02 L1753.71,673.44 L1754.31,675.14 L1754.91,677.10 L1755.52,679.32 L1756.12,681.77 L1756.72,684.45 L1757.32,687.35 L1757.92,690.44 L1758.53,693.72 L1759.13,697.17 L1759.73,700.78 L1760.33,704.53 L1760.93,708.42 L1761.54,712.43 L1762.14,716.55 L1762.74,720.75 L1763.34,725.04 L1763.95,729.40 L1764.55,733.80 L1765.15,738.25 L1765.75,742.72 L1766.35,747.21 L1766.96,751.70 L1767.56,756.17 L1768.16,760.62 L1768.76,765.02 L1769.37,769.38 L1769.97,773.67 L1770.57,777.87 L1771.17,781.99 L1771.77,786.00 L1772.38,789.89 L1772.98,793.64 L1773.58,797.25 L1774.18,800.71 L1774.78,803.98 L1775.39,807.08 L1775.99,809.97 L1776.59,812.65" fill="none" stroke="#5e6472" stroke-width="2" stroke-linecap="round" stroke-linejoin="round"/><path d="M1086.00,853.00C1095.63,853.00 1105.27,853.00 1114.90,853.00C1124.53,853.00 1134.17,638.80 1143.80,638.80C1153.43,638.80 1163.07,853.00 1172.70,853.00C1182.33,853.00 1191.97,853.00 1201.60,853.00C1211.23,853.00 1220.87,832.60 1230.50,822.40C1240.13,812.20 1249.77,807.10 1259.40,791.80C1269.03,776.50 1278.67,730.60 1288.30,730.60C1297.93,730.60 1307.57,761.20 1317.20,761.20C1326.83,761.20 1336.47,730.60 1346.10,730.60C1355.73,730.60 1365.37,771.40 1375.00,791.80C1384.63,812.20 1394.27,853.00 1403.90,853.00C1413.53,853.00 1423.17,853.00 1432.80,853.00C1442.43,853.00 1452.07,842.80 1461.70,822.40C1471.33,802.00 1480.97,700.00 1490.60,700.00C1500.23,700.00 1509.87,771.40 1519.50,791.80C1529.13,812.20 1538.77,822.40 1548.40,822.40C1558.03,822.40 1567.67,822.40 1577.30,822.40C1586.93,822.40 1596.57,853.00 1606.20,853.00C1615.83,853.00 1625.47,853.00 1635.10,853.00C1644.73,853.00 1654.37,791.80 1664.00,791.80C1673.63,791.80 1683.27,853.00 1692.90,853.00C1702.53,853.00 1712.17,700.00 1721.80,700.00C1731.43,700.00 1741.07,700.00 1750.70,700.00C1760.33,700.00 1769.97,802.00 1779.60,822.40C1789.23,842.80 1798.87,853.00 1808.50,853.00C1818.13,853.00 1827.77,853.00 1837.40,853.00" fill="none" stroke="#06c05a" stroke-width="2"/></svg><div class="b" style="left:505px;top:574px;width:8px;height:8px;background:#5e6472;border-radius:50%;"></div><div class="t" style="left:520.1px;top:571.55px;font-size:12.34px;line-height:12.34px;color:#9aa5b8;font-weight:400;">Total LI Messages &amp; Emails</div><div class="b" style="left:688.5px;top:574px;width:8px;height:8px;background:#06c05a;border-radius:50%;"></div><div class="t" style="left:703.5px;top:571.45px;font-size:12.46px;line-height:12.46px;color:#9aa5b8;font-weight:400;">Total Sponsored LI Messages &amp; Emails</div><div class="b" style="left:1597px;top:574px;width:8px;height:8px;background:#5e6472;border-radius:50%;"></div><div class="t" style="left:1611.6px;top:571.52px;font-size:12.38px;line-height:12.38px;color:#9aa5b8;font-weight:400;">Total Replies</div><div class="b" style="left:1699px;top:574px;width:8px;height:8px;background:#06c05a;border-radius:50%;"></div><div class="t" style="left:1713.7px;top:571.39px;font-size:12.53px;line-height:12.53px;color:#9aa5b8;font-weight:400;">Total Sponsored Replies</div><div class="b" style="left:908.3px;top:607.5px;width:1.4px;height:245px;background:#e2e4e8;"></div><div class="b" style="left:903px;top:844.5px;width:12px;height:12px;background:#06c462;border-radius:50%;border:2.3px solid #0f1520;box-sizing:border-box;"></div><div class="b" style="left:588px;top:564px;width:310px;height:85px;background:#111827;border-radius:7px;border:1px solid #2a3343;box-shadow:0 4px 10px rgba(0,0,0,0.18);"></div><div class="b" style="left:589px;top:596px;width:308px;height:1.3px;background:#dfe5ee;"></div><div class="t" style="left:604.5px;top:573.87px;font-size:12.2px;line-height:12.2px;color:#ffffff;font-weight:400;">Apr 27</div><div class="b" style="left:605.7px;top:608.9px;width:8px;height:8px;background:#6b7280;border-radius:50%;"></div><div class="t" style="left:625px;top:606.95px;font-size:12.34px;line-height:12.34px;color:#c9ced6;font-weight:400;">Total LI Messages &amp; Emails</div><div class="b" style="left:605.7px;top:628.7px;width:8px;height:8px;background:#12c25c;border-radius:50%;"></div><div class="t" style="left:625px;top:626.95px;font-size:12.46px;line-height:12.46px;color:#c9ced6;font-weight:400;">Total Sponsored LI Messages &amp; Emails</div><div class="t" style="right:995.5px;top:607.07px;font-size:12.2px;line-height:12.2px;color:#ffffff;font-weight:400;text-align:right;">1</div><div class="t" style="right:995.5px;top:627.17px;font-size:12.2px;line-height:12.2px;color:#ffffff;font-weight:400;text-align:right;">1</div>
</body></html>
